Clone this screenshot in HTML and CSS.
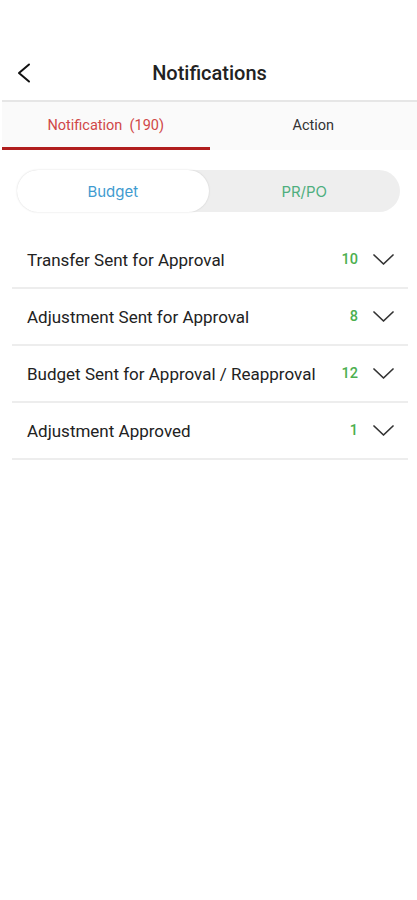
FILE: index.html
```html
<!DOCTYPE html>
<html lang="en">
<head>
    <meta charset="UTF-8">
    <meta name="viewport" content="width=device-width, initial-scale=1.0">
    <title>Notifications</title>
    <link rel="stylesheet" href="styles.css">
</head>
<body>
    <header class="topbar">
        <button class="back" aria-label="Back">
            <svg width="14" height="20" viewBox="0 0 14 20"><polyline points="12,1.5 2,10 12,18.5" fill="none" stroke="#111" stroke-width="2" stroke-linecap="round" stroke-linejoin="round"/></svg>
        </button>
        <h1>Notifications</h1>
    </header>

    <nav class="tabs">
        <div class="tab active">Notification&nbsp;&nbsp;(190)</div>
        <div class="tab">Action</div>
    </nav>

    <div class="segment">
        <div class="seg seg-on">Budget</div>
        <div class="seg seg-off">PR/PO</div>
    </div>

    <ul class="list">
        <li class="row">
            <span class="label">Transfer Sent for Approval</span>
            <span class="count">10</span>
            <svg class="chev" width="21" height="11" viewBox="0 0 21 11"><polyline points="1,1 10.5,10 20,1" fill="none" stroke="#333" stroke-width="1.7" stroke-linecap="round" stroke-linejoin="round"/></svg>
        </li>
        <li class="row">
            <span class="label">Adjustment Sent for Approval</span>
            <span class="count">8</span>
            <svg class="chev" width="21" height="11" viewBox="0 0 21 11"><polyline points="1,1 10.5,10 20,1" fill="none" stroke="#333" stroke-width="1.7" stroke-linecap="round" stroke-linejoin="round"/></svg>
        </li>
        <li class="row">
            <span class="label">Budget Sent for Approval / Reapproval</span>
            <span class="count">12</span>
            <svg class="chev" width="21" height="11" viewBox="0 0 21 11"><polyline points="1,1 10.5,10 20,1" fill="none" stroke="#333" stroke-width="1.7" stroke-linecap="round" stroke-linejoin="round"/></svg>
        </li>
        <li class="row">
            <span class="label">Adjustment Approved</span>
            <span class="count">1</span>
            <svg class="chev" width="21" height="11" viewBox="0 0 21 11"><polyline points="1,1 10.5,10 20,1" fill="none" stroke="#333" stroke-width="1.7" stroke-linecap="round" stroke-linejoin="round"/></svg>
        </li>
    </ul>
</body>
</html>
```

FILE: styles.css
```css
body {
    margin: 0;
    padding: 0;
    background: #fff;
    font-family: Roboto, "Liberation Sans", sans-serif;
    color: #222;
}

.topbar {
    position: relative;
    height: 54px;
    padding-top: 46px;
    display: flex;
    align-items: center;
    justify-content: center;
    border-bottom: 2px solid #e6e6e6;
    margin-left: 2px;
}

.back {
    position: absolute;
    left: 15px;
    top: 63px;
    background: none;
    border: none;
    padding: 0;
    display: flex;
}

.topbar h1 {
    margin: 0;
    font-size: 20px;
    font-weight: 500;
    color: #222;
}

.tabs {
    display: flex;
    height: 48px;
    background: #fafafa;
    margin-left: 2px;
}

.tab {
    flex: 1;
    display: flex;
    align-items: center;
    justify-content: center;
    font-size: 14.5px;
    color: #333;
    border-bottom: 3px solid transparent;
    padding-top: 1px;
}

.tab.active {
    color: #d04848;
    border-bottom-color: #b01e1e;
}

.segment {
    display: flex;
    height: 42px;
    margin: 20px 17px 0 17px;
    background: #eeeeee;
    border-radius: 21px;
    font-family: Inter, "Open Sans", sans-serif;
    font-size: 15px;
}

.seg {
    flex: 1;
    display: flex;
    align-items: center;
    justify-content: center;
    border-radius: 21px;
}

.seg-on {
    background: #fff;
    color: #3f9bd0;
    box-shadow: 0 0 2px rgba(0, 0, 0, 0.15);
}

.seg-off {
    color: #4fae7e;
}

.list {
    list-style: none;
    margin: 20px 9px 0 12px;
    padding: 0;
}

.row {
    height: 55px;
    display: flex;
    align-items: center;
    padding: 0 14px 0 15px;
    border-bottom: 2px solid #ededed;
}

.label {
    flex: 1;
    font-size: 17px;
    color: #222;
}

.count {
    font-size: 14.5px;
    font-weight: 500;
    color: #4caf50;
    margin-right: 15px;
}

.chev {
    display: block;
}
```
